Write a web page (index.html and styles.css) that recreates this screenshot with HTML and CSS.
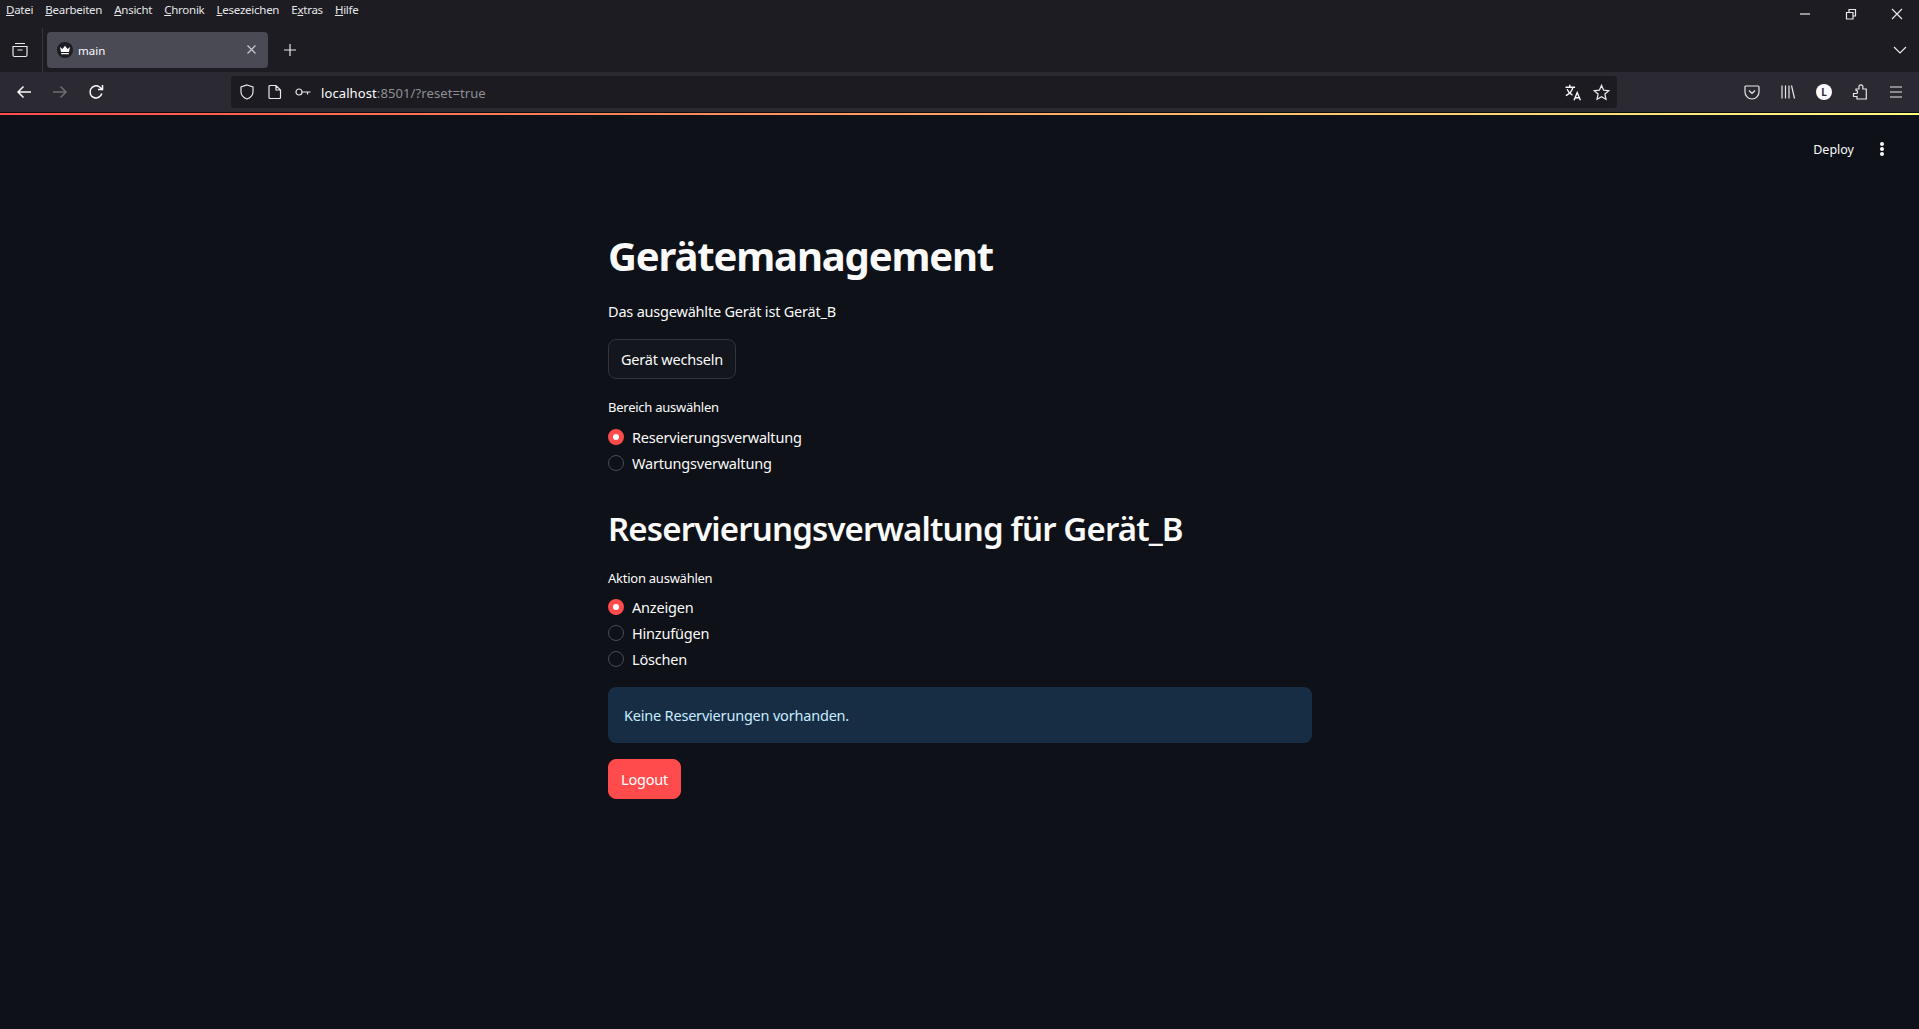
FILE: index.html
```html
<!DOCTYPE html>
<html lang="de">
<head>
    <meta charset="UTF-8">
    <title>main</title>
    <link rel="stylesheet" href="styles.css">
</head>
<body>
    <div class="browser">
        <div class="menu-row">
            <nav class="menu-bar">
                <span><u>D</u>atei</span>
                <span><u>B</u>earbeiten</span>
                <span><u>A</u>nsicht</span>
                <span><u>C</u>hronik</span>
                <span><u>L</u>esezeichen</span>
                <span>E<u>x</u>tras</span>
                <span><u>H</u>ilfe</span>
            </nav>
            <div class="window-controls">
                <svg width="16" height="16" viewBox="0 0 16 16"><path d="M3 8h10" class="line"/></svg>
                <svg width="16" height="16" viewBox="0 0 16 16"><path d="M3.500 6.500h6.500v6.500h-6.500zM6 6.500v-3h6.500v6.500h-2.500" class="line"/></svg>
                <svg width="16" height="16" viewBox="0 0 16 16"><path d="M3 3l10 10M13 3l-10 10" class="line"/></svg>
            </div>
        </div>

        <div class="tab-row">
            <div class="view-btn">
                <svg width="16" height="16" viewBox="0 0 16 16"><path d="M3 1.500h10M1 4.500h14v8.500a1.500 1.500 0 0 1-1.500 1.500h-11a1.500 1.500 0 0 1-1.500-1.500zM5.500 8h5" class="line"/></svg>
            </div>
            <div class="tab">
                <span class="favicon">
                    <svg width="12" height="10" viewBox="0 0 12 10"><path d="M1 2l2.500 2L6 .8 8.500 4 11 2l-1 5H2zM2.200 8h7.600v1.300H2.200z" fill="#fff"/></svg>
                </span>
                <span class="tab-title">main</span>
                <svg width="12" height="12" viewBox="0 0 12 12"><path d="M1.500 1.500l8 8M9.500 1.500l-8 8" class="line dim"/></svg>
            </div>
            <svg class="new-tab" width="14" height="14" viewBox="0 0 14 14"><path d="M7 1v12M1 7h12" class="line"/></svg>
            <svg class="tab-list" width="14" height="14" viewBox="0 0 14 14"><path d="M1 4l6 6 6-6" class="line"/></svg>
        </div>

        <div class="toolbar">
            <div class="nav-btns">
                <svg width="16" height="16" viewBox="0 0 16 16"><path d="M15 8H2M7.500 2.500L2 8l5.500 5.500" class="line strong"/></svg>
                <svg width="16" height="16" viewBox="0 0 16 16"><path d="M1 8h13M8.500 2.500L14 8l-5.500 5.500" class="line faded"/></svg>
                <svg width="16" height="16" viewBox="0 0 16 16"><path d="M13.800 9.500A6 6 0 1 1 11.500 3L14 5M14.500 1v4.500H10" class="line strong"/></svg>
            </div>
            <div class="url-bar">
                <svg width="16" height="16" viewBox="0 0 16 16"><path d="M8 1l6 2v5c0 3.500-3 5.800-6 7-3-1.200-6-3.500-6-7V3z" class="line"/></svg>
                <svg width="14" height="16" viewBox="0 0 14 16"><path d="M2 1.500h6l4.500 4.500v7.500a1 1 0 0 1-1 1h-9.500a1 1 0 0 1-1-1v-11a1 1 0 0 1 1-1zM8 1.500V6h4.500" class="line"/></svg>
                <svg class="key" width="16" height="10" viewBox="0 0 16 10"><circle cx="4" cy="5" r="3" class="line"/><path d="M7 5h8.500M12.500 5v2.500" class="line"/></svg>
                <span class="url"><span class="host">localhost</span>:8501/?reset=true</span>
                <svg class="translate" width="17" height="17" viewBox="0 0 16 16"><path d="M0.500 3h9M4.500 .8v2.200M7.500 3C6.700 6.500 4 9.500 .8 11M2 5c1 2.500 2.800 4.500 5 5.500M8.500 15.300l3-7.300 3 7.300M9.500 13h4" class="line bright"/></svg>
                <svg width="17" height="17" viewBox="0 0 16 16"><path d="M8 1.300l2 4.500 4.800.5-3.600 3.200 1 4.800L8 12l-4.200 2.300 1-4.800L1.200 6.300 6 5.800z" class="line"/></svg>
            </div>
            <div class="tool-btns">
                <svg width="16" height="16" viewBox="0 0 16 16"><path d="M2 2h12a1 1 0 0 1 1 1v5a7 7 0 0 1-14 0V3a1 1 0 0 1 1-1zM5 6.500L8 9.500l3-3" class="line"/></svg>
                <svg width="16" height="16" viewBox="0 0 16 16"><path d="M2 1.500v13M5.500 1.500v13M9 1.500v13M11.500 1.500l3 13" class="line"/></svg>
                <span class="avatar">L</span>
                <svg width="16" height="16" viewBox="0 0 16 16"><path d="M1.500 9.500h2.500a1.500 1.500 0 1 0 0-3.200V5h3V3.500a2 2 0 1 1 3.800 0V5h3.500v10H5v-2.500H1.500z" class="line"/></svg>
                <svg width="16" height="16" viewBox="0 0 16 16"><path d="M2 3h12M2 8h12M2 13h12" class="line"/></svg>
            </div>
        </div>
    </div>

    <div class="decoration"></div>

    <div class="app">
        <header class="app-header">
            <span class="deploy">Deploy</span>
            <span class="kebab"><i></i><i></i><i></i></span>
        </header>

        <main class="block">
            <h1>Gerätemanagement</h1>
            <p class="text">Das ausgewählte Gerät ist Gerät_B</p>
            <button class="btn">Gerät wechseln</button>

            <div class="widget-label">Bereich auswählen</div>
            <div class="radio-group">
                <div class="radio checked"><span class="dot"></span>Reservierungsverwaltung</div>
                <div class="radio"><span class="dot"></span>Wartungsverwaltung</div>
            </div>

            <h2>Reservierungsverwaltung für Gerät_B</h2>

            <div class="widget-label tight">Aktion auswählen</div>
            <div class="radio-group close">
                <div class="radio checked"><span class="dot"></span>Anzeigen</div>
                <div class="radio"><span class="dot"></span>Hinzufügen</div>
                <div class="radio"><span class="dot"></span>Löschen</div>
            </div>

            <div class="alert">Keine Reservierungen vorhanden.</div>
            <button class="btn primary">Logout</button>
        </main>
    </div>
</body>
</html>
```

FILE: styles.css
```css
* {
    box-sizing: border-box;
}
html, body {
    height: 100%;
}
body {
    margin: 0;
    display: flex;
    flex-direction: column;
    background-color: #0e1117;
    color: #fafafa;
    font-family: 'Noto Sans', sans-serif;
    overflow: hidden;
}

/* browser chrome */
.browser {
    background-color: #1c1c22;
    font-size: 11.5px;
}
.line {
    fill: none;
    stroke: #e8e8ea;
    stroke-width: 1.2;
}
.line.strong {
    stroke: #fbfbfe;
    stroke-width: 1.5;
}
.line.bright {
    stroke: #fbfbfe;
    stroke-width: 1.3;
}
.line.dim {
    stroke: #c8c8cc;
}
.line.faded {
    stroke: #6d6d73;
    stroke-width: 1.5;
}
.menu-row {
    height: 28px;
    display: flex;
    justify-content: space-between;
}
.menu-bar {
    display: flex;
    gap: 12px;
    padding: 1px 0 0 6px;
    height: 20px;
    color: #e6e6e8;
    font-size: 11.5px;
    letter-spacing: -0.25px;
    line-height: 18px;
}
.window-controls {
    display: flex;
    gap: 30px;
    padding: 6px 14px 0 0;
}
.tab-row {
    height: 44px;
    display: flex;
    align-items: center;
}
.view-btn {
    width: 43px;
    height: 44px;
    padding: 14px 0 0 12px;
    border-right: 1px solid #35353b;
}
.tab {
    width: 221px;
    height: 36px;
    margin-left: 4px;
    padding: 0 10px;
    display: flex;
    align-items: center;
    gap: 5px;
    background-color: #4a4a54;
    border-radius: 4px;
    color: #fbfbfe;
}
.favicon {
    width: 16px;
    height: 16px;
    border-radius: 50%;
    background-color: #1c1c22;
    display: flex;
    align-items: center;
    justify-content: center;
}
.tab-title {
    flex: 1;
}
.new-tab {
    margin-left: 15px;
}
.tab-list {
    margin-left: auto;
    margin-right: 12px;
}
.toolbar {
    height: 41px;
    padding-top: 4px;
    display: flex;
    background-color: #2b2a33;
    border-bottom: 1px solid #0c0c10;
}
.nav-btns {
    width: 231px;
    padding: 8px 0 0 16px;
    display: flex;
    gap: 20px;
}
.url-bar {
    width: 1386px;
    height: 32px;
    padding: 0 7px 0 8px;
    display: flex;
    align-items: center;
    gap: 13px;
    background-color: #1c1b22;
    border-radius: 4px;
}
.url {
    flex: 1;
    margin-left: -3px;
    padding-top: 1px;
    font-size: 13px;
    letter-spacing: 0.1px;
    color: #8f8f94;
}
.url .host {
    color: #fbfbfe;
}
.translate {
    margin-right: -2px;
}
.tool-btns {
    flex: 1;
    padding: 8px 15px 0 127px;
    display: flex;
    justify-content: space-between;
}
.avatar {
    width: 16px;
    height: 16px;
    border-radius: 50%;
    background-color: #fbfbfe;
    color: #2b2a33;
    font-size: 10px;
    font-weight: 700;
    line-height: 16px;
    text-align: center;
}
.decoration {
    height: 2px;
    background-image: linear-gradient(90deg, #ff4b4b, #fffd80);
}

/* streamlit app */
.app {
    flex: 1;
}
.app-header {
    height: 68px;
    padding: 0 35px 0 0;
    display: flex;
    justify-content: flex-end;
    align-items: center;
    gap: 26px;
    font-size: 12.500px;
}
.kebab {
    display: flex;
    flex-direction: column;
    gap: 1px;
}
.kebab i {
    width: 4px;
    height: 4px;
    border-radius: 50%;
    background-color: #fafafa;
}
.block {
    width: 704px;
    margin: 0 0 0 608px;
    padding-top: 40px;
    font-size: 14.500px;
    letter-spacing: -0.2px;
}
h1 {
    margin: 0;
    font-size: 40px;
    font-weight: 700;
    line-height: 66px;
    letter-spacing: -1.15px;
}
h2 {
    margin: 0;
    font-size: 33px;
    font-weight: 600;
    line-height: 48px;
    letter-spacing: -0.85px;
    padding-top: 29px;
}
.text {
    margin: 0;
    padding-top: 10px;
    line-height: 24px;
}
.btn {
    display: block;
    height: 40px;
    margin-top: 16px;
    padding: 0 12px;
    background-color: #13161d;
    border: 1px solid #33353c;
    border-radius: 8px;
    color: #fafafa;
    font-family: inherit;
    font-size: 14.500px;
    letter-spacing: -0.2px;
}
.btn.primary {
    background-color: #ff4b4b;
    border-color: #ff4b4b;
    color: #fff;
}
.widget-label {
    margin-top: 16px;
    font-size: 13px;
    letter-spacing: -0.25px;
    line-height: 24px;
}
.widget-label.tight {
    margin-top: 13px;
}
.radio-group {
    margin-top: 5px;
}
.radio-group.close {
    margin-top: 4px;
}
.radio {
    height: 26px;
    display: flex;
    align-items: center;
    gap: 8px;
    color: #fafafa;
}
.dot {
    width: 16px;
    height: 16px;
    border: 1px solid #4a4c53;
    border-radius: 50%;
    background-color: #0e1117;
}
.radio.checked .dot {
    border: 5px solid #ff4b4b;
    background-color: #fff;
}
.alert {
    height: 56px;
    margin-top: 15px;
    padding: 0 16px;
    display: flex;
    align-items: center;
    border-radius: 8px;
    background-color: #172d43;
    color: #c7ebff;
}
```
